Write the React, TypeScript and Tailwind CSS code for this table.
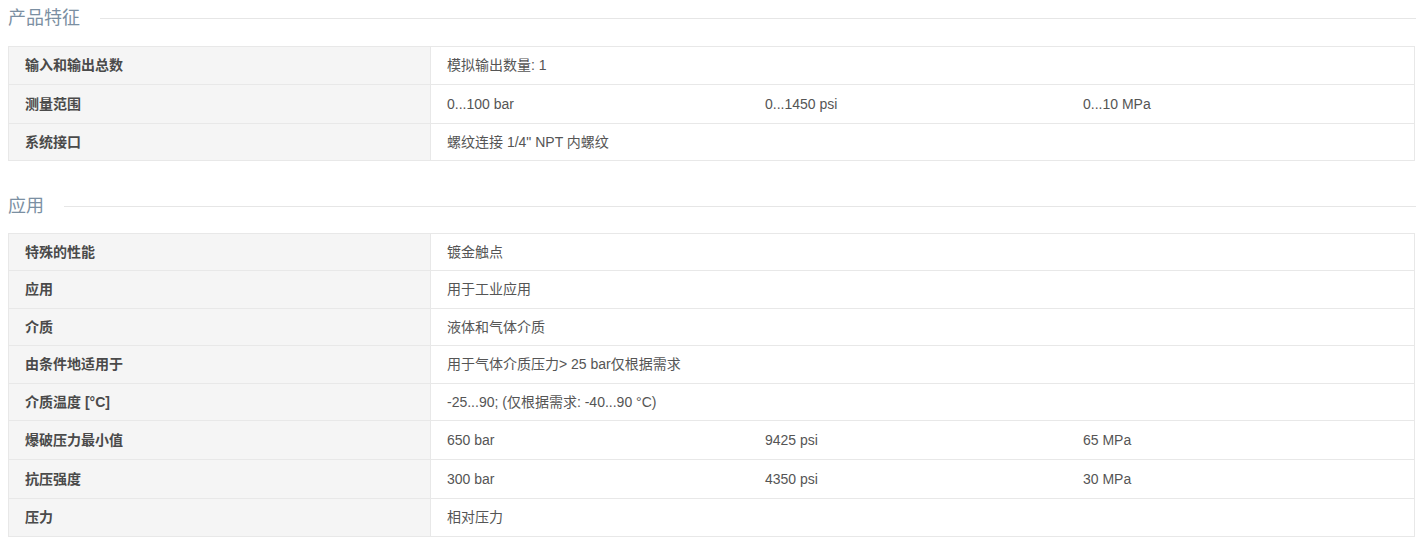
const font = { fontFamily: '"Liberation Sans", Arial, "Noto Sans CJK SC", sans-serif' };

type Row = { label: string; values: string[]; h: string };

const features: Row[] = [
  { label: "输入和输出总数", values: ["模拟输出数量: 1"], h: "h-[38px]" },
  { label: "测量范围", values: ["0...100 bar", "0...1450 psi", "0...10 MPa"], h: "h-[39px]" },
  { label: "系统接口", values: ['螺纹连接 1/4" NPT 内螺纹'], h: "h-[37px]" },
];

const application: Row[] = [
  { label: "特殊的性能", values: ["镀金触点"], h: "h-[37px]" },
  { label: "应用", values: ["用于工业应用"], h: "h-[38px]" },
  { label: "介质", values: ["液体和气体介质"], h: "h-[37px]" },
  { label: "由条件地适用于", values: ["用于气体介质压力> 25 bar仅根据需求"], h: "h-[38px]" },
  { label: "介质温度 [°C]", values: ["-25...90; (仅根据需求: -40...90 °C)"], h: "h-[37px]" },
  { label: "爆破压力最小值", values: ["650 bar", "9425 psi", "65 MPa"], h: "h-[39px]" },
  { label: "抗压强度", values: ["300 bar", "4350 psi", "30 MPa"], h: "h-[39px]" },
  { label: "压力", values: ["相对压力"], h: "h-[38px]" },
];

function Heading({ title }: { title: string }) {
  return (
    <div className="flex items-center h-9 pl-2">
      <h2 className="text-[18px] leading-none text-[#7b8fa2] font-normal">{title}</h2>
      <div className="flex-1 h-px bg-[#e6e6e6] ml-5 mr-2" />
    </div>
  );
}

function SpecTable({ rows }: { rows: Row[] }) {
  return (
    <div className="ml-2 mr-[9px] border-t border-x border-[#e8e8e8] text-[14px]">
      {rows.map((r) => (
        <div key={r.label} className={`flex border-b border-[#e8e8e8] ${r.h}`}>
          <div className="w-[422px] shrink-0 bg-[#f5f5f5] border-r border-[#e8e8e8] flex items-center pl-4 font-bold text-[#4a4a4a]">
            {r.label}
          </div>
          <div className="flex flex-1 items-center text-[#555]">
            {r.values.length === 1 ? (
              <span className="pl-4">{r.values[0]}</span>
            ) : (
              r.values.map((v, i) => (
                <span key={v} className={i < 2 ? "w-[318px] pl-4" : "flex-1 pl-4"}>
                  {v}
                </span>
              ))
            )}
          </div>
        </div>
      ))}
    </div>
  );
}

export default function App() {
  return (
    <div className="bg-white w-[1424px] h-[544px] overflow-hidden" style={font}>
      <Heading title="产品特征" />
      <div className="mt-[10px]">
        <SpecTable rows={features} />
      </div>
      <div className="mt-[27px]">
        <Heading title="应用" />
      </div>
      <div className="mt-[9px]">
        <SpecTable rows={application} />
      </div>
    </div>
  );
}
